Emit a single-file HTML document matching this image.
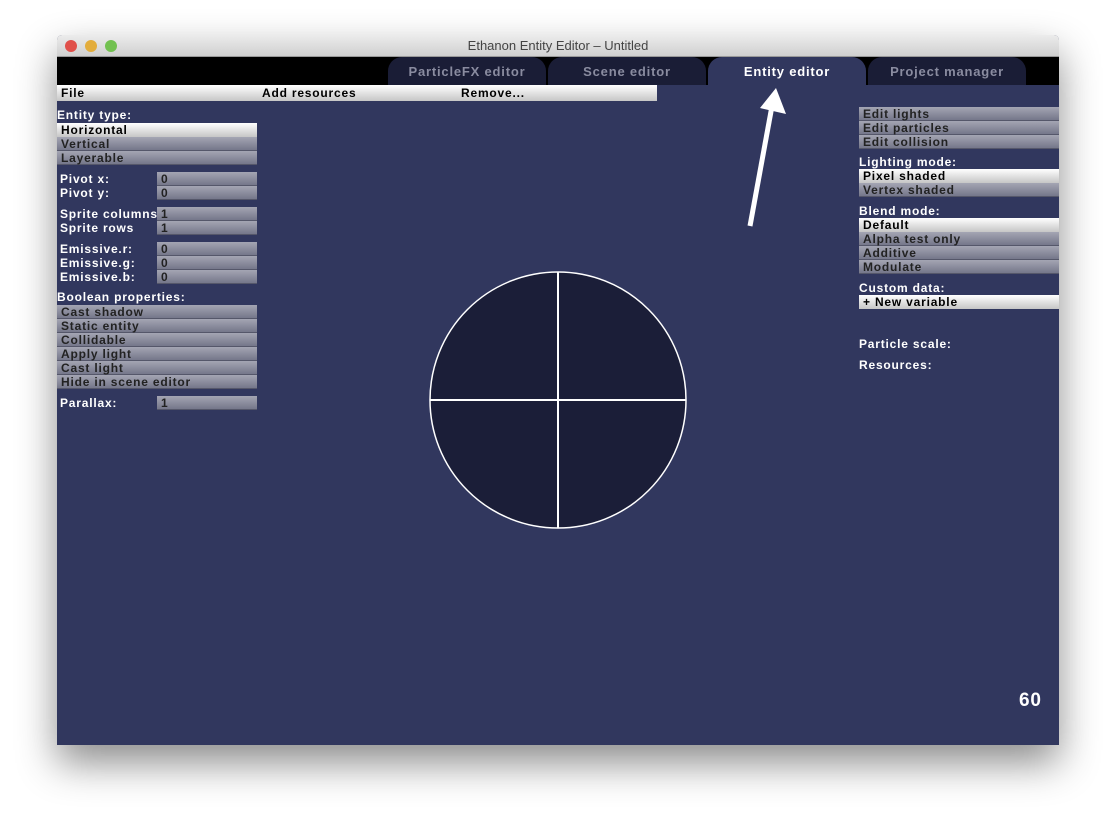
<!DOCTYPE html>
<html><head><style>
*{margin:0;padding:0;box-sizing:border-box}
body{width:1116px;height:824px;background:#fff;position:relative;overflow:hidden;font-family:"Liberation Sans",sans-serif}
.win{position:absolute;left:57px;top:35px;width:1002px;height:710px;box-shadow:0 18px 40px rgba(0,0,0,.45);border-radius:5px 5px 0 0;overflow:hidden;background:#31375e}
.tb{position:absolute;left:0;top:0;width:100%;height:22px;background:linear-gradient(#ececec,#d0d0d0);border-bottom:1px solid #999;text-align:center;font-size:13px;line-height:22px;color:#444}
.dot{position:absolute;top:5px;width:12px;height:12px;border-radius:50%}
.blk{position:absolute;left:0;top:22px;width:100%;height:28px;background:#000}
.tab{position:absolute;top:22px;height:28px;width:158px;border-radius:14px 14px 0 0;background:#1a1d36;color:#8a8ca0;font-weight:bold;font-size:13px;text-align:center;line-height:30px;letter-spacing:0.8px}
.tab.a{background:#31375e;color:#fff}
.r{position:absolute;height:14px;font-weight:bold;font-size:12px;line-height:14px;padding-left:4px;color:#222;white-space:nowrap;letter-spacing:0.8px}
.g{background:linear-gradient(#a4a5b3,#75778a);border-bottom:1px solid #55576a}
.w{background:linear-gradient(#fff,#c6c6c6);color:#000}
.l{position:absolute;color:#fff;font-weight:bold;font-size:12px;line-height:14px;white-space:nowrap;letter-spacing:0.8px}
</style></head><body>
<div class="win">
<div class="tb">Ethanon Entity Editor – Untitled
<div class="dot" style="left:8px;background:#e0504a"></div><div class="dot" style="left:28px;background:#e3ad3c"></div><div class="dot" style="left:48px;background:#72c150"></div></div>
<div class="blk"></div>
<div class="tab" style="left:331px">ParticleFX editor</div>
<div class="tab" style="left:491px">Scene editor</div>
<div class="tab a" style="left:651px">Entity editor</div>
<div class="tab" style="left:811px">Project manager</div>
<div class="r w" style="left:0;top:50px;width:600px;height:16px;line-height:16px">File<span style="position:absolute;left:205px">Add resources</span><span style="position:absolute;left:404px">Remove...</span></div>
</div>
<div class="l" style="left:57px;top:108px">Entity type:</div>
<div class="r w" style="left:57px;top:123px;width:200px">Horizontal</div>
<div class="r g" style="left:57px;top:137px;width:200px">Vertical</div>
<div class="r g" style="left:57px;top:151px;width:200px">Layerable</div>
<div class="l" style="left:60px;top:172px">Pivot x:</div><div class="r g" style="left:157px;top:172px;width:100px">0</div>
<div class="l" style="left:60px;top:186px">Pivot y:</div><div class="r g" style="left:157px;top:186px;width:100px">0</div>
<div class="r g" style="left:157px;top:207px;width:100px">1</div><div class="l" style="left:60px;top:207px">Sprite columns</div>
<div class="l" style="left:60px;top:221px">Sprite rows</div><div class="r g" style="left:157px;top:221px;width:100px">1</div>
<div class="l" style="left:60px;top:242px">Emissive.r:</div><div class="r g" style="left:157px;top:242px;width:100px">0</div>
<div class="l" style="left:60px;top:256px">Emissive.g:</div><div class="r g" style="left:157px;top:256px;width:100px">0</div>
<div class="l" style="left:60px;top:270px">Emissive.b:</div><div class="r g" style="left:157px;top:270px;width:100px">0</div>
<div class="l" style="left:57px;top:290px">Boolean properties:</div>
<div class="r g" style="left:57px;top:305px;width:200px">Cast shadow</div>
<div class="r g" style="left:57px;top:319px;width:200px">Static entity</div>
<div class="r g" style="left:57px;top:333px;width:200px">Collidable</div>
<div class="r g" style="left:57px;top:347px;width:200px">Apply light</div>
<div class="r g" style="left:57px;top:361px;width:200px">Cast light</div>
<div class="r g" style="left:57px;top:375px;width:200px">Hide in scene editor</div>
<div class="l" style="left:60px;top:396px">Parallax:</div><div class="r g" style="left:157px;top:396px;width:100px">1</div>
<div class="r g" style="left:859px;top:107px;width:200px">Edit lights</div>
<div class="r g" style="left:859px;top:121px;width:200px">Edit particles</div>
<div class="r g" style="left:859px;top:135px;width:200px">Edit collision</div>
<div class="l" style="left:859px;top:155px">Lighting mode:</div>
<div class="r w" style="left:859px;top:169px;width:200px">Pixel shaded</div>
<div class="r g" style="left:859px;top:183px;width:200px">Vertex shaded</div>
<div class="l" style="left:859px;top:204px">Blend mode:</div>
<div class="r w" style="left:859px;top:218px;width:200px">Default</div>
<div class="r g" style="left:859px;top:232px;width:200px">Alpha test only</div>
<div class="r g" style="left:859px;top:246px;width:200px">Additive</div>
<div class="r g" style="left:859px;top:260px;width:200px">Modulate</div>
<div class="l" style="left:859px;top:281px">Custom data:</div>
<div class="r w" style="left:859px;top:295px;width:200px">+ New variable</div>
<div class="l" style="left:859px;top:337px">Particle scale:</div>
<div class="l" style="left:859px;top:358px">Resources:</div>
<div class="l" style="left:1019px;top:690px;font-size:19px;line-height:22px">60</div>
<svg style="position:absolute;left:0;top:0" width="1116" height="824">
<circle cx="558" cy="400" r="128" fill="#1b1e38" stroke="#fff" stroke-width="1.5"/>
<line x1="430" y1="400" x2="686" y2="400" stroke="#fff" stroke-width="2"/>
<line x1="558" y1="272" x2="558" y2="528" stroke="#fff" stroke-width="2"/>
<line x1="750" y1="226" x2="772" y2="106" stroke="#fff" stroke-width="5"/>
<polygon points="776,88 786,114 760,108" fill="#fff"/>
</svg>
</body></html>
